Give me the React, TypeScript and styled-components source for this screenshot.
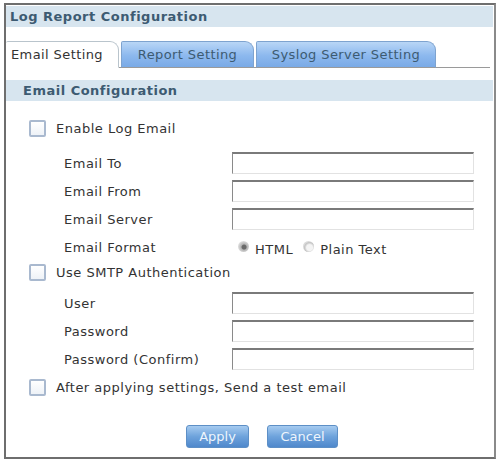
import React from 'react';
import styled, { createGlobalStyle } from 'styled-components';

const GlobalStyle = createGlobalStyle`
  body {
    margin: 0;
    background: #ffffff;
    font-family: "DejaVu Sans", Verdana, sans-serif;
  }
`;

const Frame = styled.div`
  box-sizing: border-box;
  margin: 3px 0 0 4px;
  width: 492px;
  height: 456px;
  border: 2px solid #6e6e6e;
  border-right-color: #8a8a8a;
  padding: 1px 1px 0 0;
  display: flex;
  flex-direction: column;
`;

const TitleBar = styled.div`
  height: 21px;
  background: #d7e5ef;
  display: flex;
  align-items: center;
  padding-left: 4px;
  font-size: 13px;
  letter-spacing: 0.5px;
  font-weight: bold;
  color: #3d5b72;
`;

const TabStrip = styled.div`
  margin-top: 13px;
  height: 27px;
  display: flex;
  align-items: flex-end;
  gap: 2px;
  border-bottom: 1px solid #9a9a9a;
  margin-right: 3px;
`;

const Tab = styled.div<{ $active?: boolean; $width: number }>`
  box-sizing: border-box;
  width: ${(p) => p.$width}px;
  height: 27px;
  margin-bottom: -1px;
  display: flex;
  align-items: center;
  justify-content: ${(p) => (p.$active ? 'flex-start' : 'center')};
  font-size: 13px;
  letter-spacing: 0.4px;
  border-radius: 2px 9px 0 0;
  border: 1px solid ${(p) => (p.$active ? '#b9c4cc' : '#7ea3cf')};
  border-bottom: ${(p) => (p.$active ? '1px solid #ffffff' : '1px solid #9a9a9a')};
  border-left: ${(p) => (p.$active ? 'none' : undefined)};
  background: ${(p) =>
    p.$active ? '#ffffff' : 'linear-gradient(#b9d6f6, #8cb8ee 55%, #7aaae6)'};
  color: ${(p) => (p.$active ? '#333333' : '#3d5b72')};
  padding-left: ${(p) => (p.$active ? '5px' : '0')};
`;

const SectionBar = styled.div`
  margin-top: 12px;
  height: 21px;
  background: #d7e5ef;
  display: flex;
  align-items: center;
  padding-left: 17px;
  font-size: 13px;
  letter-spacing: 0.5px;
  font-weight: bold;
  color: #3d5b72;
`;

const Form = styled.div`
  margin-top: 13px;
  display: flex;
  flex-direction: column;
  font-size: 13px;
  letter-spacing: 0.5px;
  color: #333333;
`;

const CheckRow = styled.label<{ $shift?: number }>`
  height: 28px;
  display: flex;
  align-items: center;
  gap: 10px;
  padding-left: 23px;
  margin-top: ${(p) => p.$shift ?? 0}px;
`;

const Box = styled.span`
  box-sizing: border-box;
  width: 17px;
  height: 17px;
  border: 2px solid #a9b9cf;
  border-radius: 2px;
  background: linear-gradient(#ffffff, #eef2f7);
`;

const FieldRow = styled.div<{ $shift?: number }>`
  height: 28px;
  display: grid;
  grid-template-columns: 168px 242px;
  align-items: center;
  padding-left: 58px;
  margin-top: ${(p) => p.$shift ?? 0}px;
`;

const TextBox = styled.div`
  box-sizing: border-box;
  height: 22px;
  border-top: 2px solid #7a7a7a;
  border-left: 1px solid #8a8a8a;
  border-right: 1px solid #e2e2e2;
  border-bottom: 1px solid #e2e2e2;
  background: #ffffff;
`;

const Radios = styled.div`
  display: flex;
  align-items: center;
  padding-left: 6px;
  padding-top: 5px;
`;

const Radio = styled.span<{ $on?: boolean }>`
  width: 11px;
  height: 11px;
  border-radius: 50%;
  margin: -6px 6px 0 0;
  background: ${(p) =>
    p.$on
      ? 'radial-gradient(circle at 55% 55%, #6a6a6a 0 2px, #b4b4b4 3px, #e0e0e0 6px)'
      : 'radial-gradient(circle at 60% 60%, #f4f4f4 0 3px, #c4c4c4 5px, #dadada 6px)'};
`;

const RadioText = styled.span`
  margin-right: 10px;
`;

const Buttons = styled.div`
  margin-top: 24px;
  display: flex;
  gap: 18px;
  padding-left: 180px;
`;

const Button = styled.div<{ $width: number }>`
  box-sizing: border-box;
  width: ${(p) => p.$width}px;
  height: 23px;
  border: 1px solid #5d8fc6;
  border-radius: 3px;
  background: linear-gradient(#a6cbf0, #6ea3dc 50%, #4f88cc);
  color: #eef5fc;
  font-size: 13px;
  letter-spacing: 0;
  display: flex;
  align-items: center;
  justify-content: center;
`;

const fields = ['Email To', 'Email From', 'Email Server'];
const authFields = ['User', 'Password', 'Password (Confirm)'];

export default function App() {
  return (
    <>
      <GlobalStyle />
      <Frame>
        <TitleBar>Log Report Configuration</TitleBar>
        <TabStrip>
          <Tab $active $width={113}>Email Setting</Tab>
          <Tab $width={133}>Report Setting</Tab>
          <Tab $width={180}>Syslog Server Setting</Tab>
        </TabStrip>
        <SectionBar>Email Configuration</SectionBar>
        <Form>
          <CheckRow>
            <Box />
            Enable Log Email
          </CheckRow>
          {fields.map((f, i) => (
            <FieldRow key={f} $shift={i === 0 ? 7 : 0}>
              <span>{f}</span>
              <TextBox />
            </FieldRow>
          ))}
          <FieldRow>
            <span>Email Format</span>
            <Radios>
              <Radio $on />
              <RadioText>HTML</RadioText>
              <Radio />
              <RadioText>Plain Text</RadioText>
            </Radios>
          </FieldRow>
          <CheckRow $shift={-3}>
            <Box />
            Use SMTP Authentication
          </CheckRow>
          {authFields.map((f, i) => (
            <FieldRow key={f} $shift={i === 0 ? 3 : 0}>
              <span>{f}</span>
              <TextBox />
            </FieldRow>
          ))}
          <CheckRow>
            <Box />
            After applying settings, Send a test email
          </CheckRow>
          <Buttons>
            <Button $width={63}>Apply</Button>
            <Button $width={71}>Cancel</Button>
          </Buttons>
        </Form>
      </Frame>
    </>
  );
}
